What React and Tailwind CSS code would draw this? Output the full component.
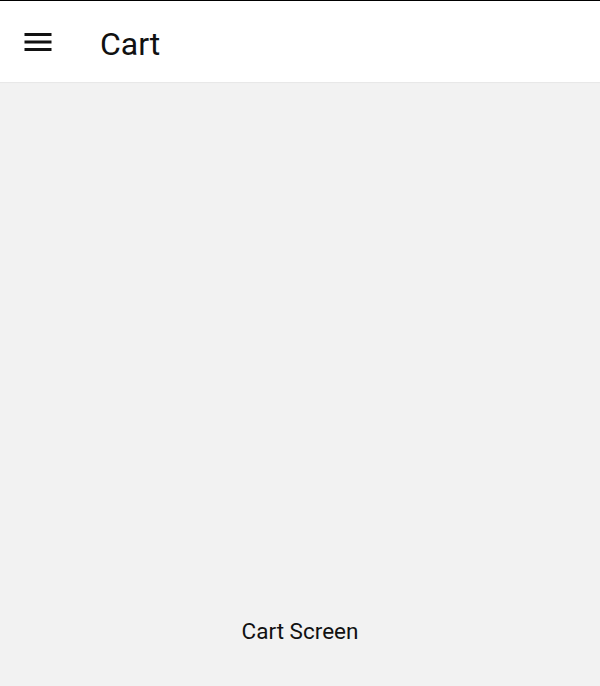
import React from 'react';

function MenuIcon() {
    return (
        <svg width="36" height="36" viewBox="0 0 24 24" fill="#111111">
            <path d="M3 18h18v-2H3v2zm0-5h18v-2H3v2zm0-7v2h18V6H3z" />
        </svg>
    );
}

function App() {
    return (
        <div
            className="flex flex-col h-[686px] w-[600px] bg-[#f2f2f2] border-t border-black"
            style={{ fontFamily: 'Roboto, "Noto Sans", sans-serif' }}
        >
            <header className="flex items-center h-[81px] bg-white pl-[20px] shadow-[0_1px_1px_rgba(0,0,0,0.04)]">
                <button className="flex items-center justify-center w-[36px] h-[36px]">
                    <MenuIcon />
                </button>
                <h1 className="ml-[44px] text-[32px] font-normal text-[#111111] leading-none mt-[5px]">
                    Cart
                </h1>
            </header>
            <main className="flex flex-1 flex-col items-center justify-end pb-[42px]">
                <p className="text-[22.5px] leading-[26px] text-[#111111]">Cart Screen</p>
            </main>
        </div>
    );
}

export default App;
